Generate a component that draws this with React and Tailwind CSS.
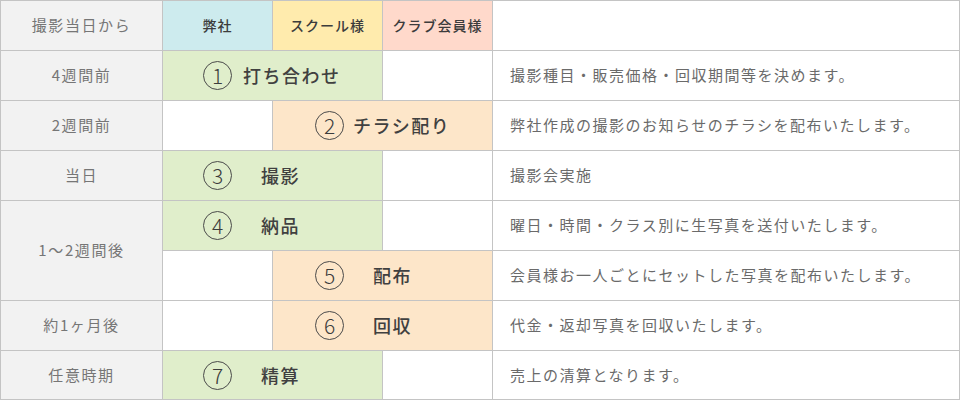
const font = { fontFamily: '"Noto Sans CJK JP", "Noto Sans", sans-serif' };

function Label({ children, className = '' }) {
    return (
        <div className={`bg-[#f2f2f2] flex items-center justify-center text-[15px] tracking-[1.6px] text-[#767676] ${className}`}>
            {children}
        </div>
    );
}

function Head({ children, className }) {
    return (
        <div className={`flex items-center justify-center text-[14px] tracking-[1px] font-medium text-[#3c3c3c] ${className}`}>
            {children}
        </div>
    );
}

function Step({ num, children, className, textClass }) {
    return (
        <div className={`col-span-2 flex items-center ${className}`}>
            <span className="w-[29px] h-[29px] shrink-0 rounded-full border border-[#4a4a4a] flex items-center justify-center text-[21px] leading-none text-[#3c3c3c] font-light">
                {num}
            </span>
            <span className={`text-[18px] tracking-[1.5px] font-medium text-[#404040] ${textClass}`}>{children}</span>
        </div>
    );
}

function Desc({ children }) {
    return (
        <div className="bg-white flex items-center pl-[17px] text-[15px] tracking-[1.5px] text-[#6a6a6a]">
            {children}
        </div>
    );
}

const Blank = () => <div className="bg-white" />;

export default function App() {
    return (
        <div
            style={font}
            className="w-[960px] h-[400px] bg-[#c4c4c4] p-px grid gap-px grid-cols-[161px_109px_109px_109px_1fr] grid-rows-[49px_49px_49px_49px_49px_49px_49px_48px]"
        >
            {/* header */}
            <Label>撮影当日から</Label>
            <Head className="bg-[#cdebee]">弊社</Head>
            <Head className="bg-[#ffebad]">スクール様</Head>
            <Head className="bg-[#ffd9cb]">クラブ会員様</Head>
            <Blank />

            <Label>4週間前</Label>
            <Step num="1" className="bg-[#e0eecb] pl-[40px]" textClass="ml-[11px]">打ち合わせ</Step>
            <Blank />
            <Desc>撮影種目・販売価格・回収期間等を決めます。</Desc>

            <Label>2週間前</Label>
            <Blank />
            <Step num="2" className="bg-[#fde6c9] pl-[42px]" textClass="ml-[9px]">チラシ配り</Step>
            <Desc>弊社作成の撮影のお知らせのチラシを配布いたします。</Desc>

            <Label>当日</Label>
            <Step num="3" className="bg-[#e0eecb] pl-[40px]" textClass="ml-[29px]">撮影</Step>
            <Blank />
            <Desc>撮影会実施</Desc>

            <Label className="row-span-2">1〜2週間後</Label>
            <Step num="4" className="bg-[#e0eecb] pl-[40px]" textClass="ml-[29px]">納品</Step>
            <Blank />
            <Desc>曜日・時間・クラス別に生写真を送付いたします。</Desc>

            <Blank />
            <Step num="5" className="bg-[#fde6c9] pl-[42px]" textClass="ml-[29px]">配布</Step>
            <Desc>会員様お一人ごとにセットした写真を配布いたします。</Desc>

            <Label>約1ヶ月後</Label>
            <Blank />
            <Step num="6" className="bg-[#fde6c9] pl-[42px]" textClass="ml-[29px]">回収</Step>
            <Desc>代金・返却写真を回収いたします。</Desc>

            <Label>任意時期</Label>
            <Step num="7" className="bg-[#e0eecb] pl-[40px]" textClass="ml-[29px]">精算</Step>
            <Blank />
            <Desc>売上の清算となります。</Desc>
        </div>
    );
}
